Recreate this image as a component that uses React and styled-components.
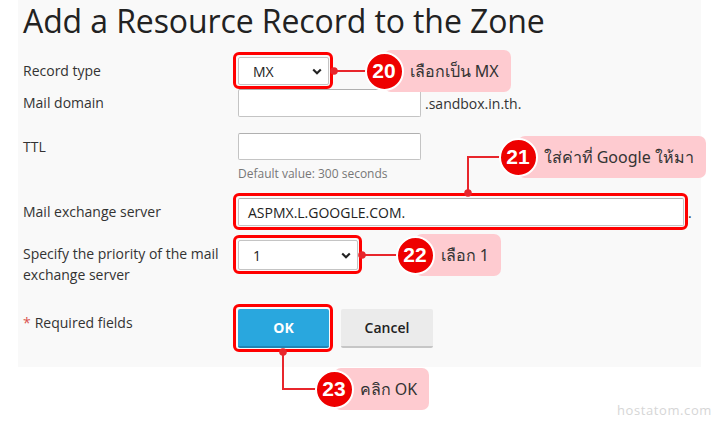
import React from "react";
import styled, { createGlobalStyle } from "styled-components";

const Global = createGlobalStyle`
  html, body { margin: 0; padding: 0; background: #fff; }
  #root { width: 720px; height: 421px; }
`;

const Page = styled.div`
  position: relative;
  width: 720px;
  height: 421px;
  overflow: hidden;
  background: #fff;
  font-family: "Open Sans", "Noto Sans", "Liberation Sans", sans-serif;
  color: #333;
`;

const Panel = styled.div`
  margin-left: 18px;
  width: 683px;
  box-sizing: border-box;
  padding: 1px 0 19px 5px;
  background: #f9f9f9;
`;

const Title = styled.h1`
  margin: 0;
  font-size: 32px;
  line-height: 40px;
  font-weight: 400;
  color: #222;
  letter-spacing: -0.1px;
`;

const Row = styled.div`
  display: flex;
  align-items: flex-start;
  margin-top: ${(p) => p.$gap}px;
`;

const Label = styled.div`
  width: 215px;
  flex: none;
  box-sizing: border-box;
  padding-top: 3px;
  font-size: 14px;
  line-height: 21px;
  color: #333;
`;

const Star = styled.span`
  color: #d9534f;
  margin-right: 4px;
`;

const Field = styled.div`
  display: flex;
  flex-direction: column;
  align-items: flex-start;
`;

const Line = styled.div`
  display: flex;
  align-items: center;
`;

const Marked = styled.div`
  position: relative;
  display: inline-flex;
  &::after {
    content: "";
    position: absolute;
    inset: -5px -4px -4px -5px;
    border: 3px solid #f00;
    border-radius: 6px;
    pointer-events: none;
  }
`;

const Select = styled.div`
  box-sizing: border-box;
  width: ${(p) => p.$w}px;
  height: ${(p) => p.$h}px;
  display: flex;
  align-items: center;
  justify-content: space-between;
  padding: 0 6px 0 14px;
  background: #fff;
  border: 1px solid #c4c4c4;
  border-radius: 2px;
  font-size: 14px;
  color: #222;
`;

const Input = styled.div`
  box-sizing: border-box;
  width: ${(p) => p.$w}px;
  height: ${(p) => p.$h}px;
  display: flex;
  align-items: center;
  padding-left: 9px;
  background: #fff;
  border: 1px solid #c4c4c4;
  border-top-color: #b0b0b0;
  border-radius: 2px;
  font-size: 14px;
  color: #222;
`;

const Suffix = styled.span`
  margin-left: 4px;
  font-size: 14px;
  color: #333;
`;

const Hint = styled.div`
  margin-top: 6px;
  font-size: 12px;
  line-height: 16px;
  color: #777;
`;

const Buttons = styled.div`
  display: flex;
  gap: 12px;
`;

const Button = styled.div`
  box-sizing: border-box;
  width: ${(p) => p.$w}px;
  height: 39px;
  display: flex;
  align-items: center;
  justify-content: center;
  border-radius: 2px;
  font-size: 14px;
  font-weight: ${(p) => (p.$primary ? 700 : 600)};
  color: ${(p) => (p.$primary ? "#fff" : "#222")};
  background: ${(p) => (p.$primary ? "#29a7de" : "#ebebeb")};
  border-bottom: 2px solid ${(p) => (p.$primary ? "#1e86b5" : "#c6c6c6")};
`;

const Footer = styled.div`
  display: flex;
  justify-content: flex-end;
  padding: 35px 8px 0 0;
`;

const Watermark = styled.span`
  font-size: 13px;
  line-height: 16px;
  color: #d6d6d6;
  letter-spacing: 0.6px;
`;

const Overlay = styled.svg`
  position: absolute;
  left: 0;
  top: 0;
  pointer-events: none;
`;

const Callout = styled.div`
  position: absolute;
  height: 42px;
  display: flex;
  align-items: center;
`;

const Badge = styled.div`
  position: relative;
  z-index: 1;
  box-sizing: border-box;
  width: 39px;
  height: 39px;
  flex: none;
  border-radius: 50%;
  background: #ee0000;
  border: 2.5px solid #fff;
  display: flex;
  align-items: center;
  justify-content: center;
  font-family: "Liberation Sans", Arial, sans-serif;
  font-weight: 700;
  font-size: 21px;
  color: #fff;
`;

const Bubble = styled.div`
  height: 42px;
  margin-left: -20px;
  padding: 0 12px 0 26px;
  display: flex;
  align-items: center;
  background: #fecbd0;
  border-radius: 7px;
  font-family: "Noto Sans", "Liberation Sans", sans-serif;
  font-size: 16px;
  font-weight: 400;
  color: #333;
  white-space: nowrap;
`;

const Chevron = () => (
  <svg width="10" height="7" viewBox="0 0 10 7">
    <path d="M1.2 1.4 L5 5.2 L8.8 1.4" fill="none" stroke="#222" strokeWidth="2.1" />
  </svg>
);

const callouts = [
  { n: "20", x: 384, y: 71, text: "เลือกเป็น MX" },
  { n: "21", x: 518, y: 157, text: "ใส่ค่าที่ Google ให้มา" },
  { n: "22", x: 415, y: 255, text: "เลือก 1" },
  { n: "23", x: 334, y: 389, text: "คลิก OK" },
];

const connectors = [
  { pts: "334,71 366,71", dot: [334, 71] },
  { pts: "500,157 468,157 468,193", dot: [468, 193] },
  { pts: "362,255 397,255", dot: [362, 255] },
  { pts: "283,352 283,389 316,389", dot: [283, 352] },
];

export default function App() {
  return (
    <Page>
      <Global />
      <Panel>
        <Title>Add a Resource Record to the Zone</Title>

        <Row $gap={16}>
          <Label>Record type</Label>
          <Field>
            <Marked>
              <Select $w={91} $h={28}>
                <span>MX</span>
                <Chevron />
              </Select>
            </Marked>
          </Field>
        </Row>

        <Row $gap={4}>
          <Label>Mail domain</Label>
          <Line>
            <Input $w={183} $h={28} />
            <Suffix>.sandbox.in.th.</Suffix>
          </Line>
        </Row>

        <Row $gap={16}>
          <Label>TTL</Label>
          <Field>
            <Input $w={183} $h={27} />
            <Hint>Default value: 300 seconds</Hint>
          </Field>
        </Row>

        <Row $gap={16}>
          <Label>Mail exchange server</Label>
          <Line>
            <Marked>
              <Input $w={446} $h={28}>ASPMX.L.GOOGLE.COM.</Input>
            </Marked>
            <Suffix>.</Suffix>
          </Line>
        </Row>

        <Row $gap={14}>
          <Label>
            Specify the priority of the mail
            <br />
            exchange server
          </Label>
          <Field>
            <Marked>
              <Select $w={120} $h={30}>
                <span>1</span>
                <Chevron />
              </Select>
            </Marked>
          </Field>
        </Row>

        <Row $gap={24}>
          <Label>
            <Star>*</Star>Required fields
          </Label>
          <Buttons>
            <Marked>
              <Button $primary $w={91}>OK</Button>
            </Marked>
            <Button $w={92}>Cancel</Button>
          </Buttons>
        </Row>
      </Panel>

      <Footer>
        <Watermark>hostatom.com</Watermark>
      </Footer>

      <Overlay width="720" height="421" viewBox="0 0 720 421">
        {connectors.map((c, i) => (
          <g key={i}>
            <polyline points={c.pts} fill="none" stroke="#e8262c" strokeWidth="2" />
            <circle cx={c.dot[0]} cy={c.dot[1]} r="3.8" fill="#e8262c" />
          </g>
        ))}
      </Overlay>

      {callouts.map((c) => (
        <Callout key={c.n} style={{ left: c.x - 19.5, top: c.y - 21 }}>
          <Badge>{c.n}</Badge>
          <Bubble>{c.text}</Bubble>
        </Callout>
      ))}
    </Page>
  );
}
